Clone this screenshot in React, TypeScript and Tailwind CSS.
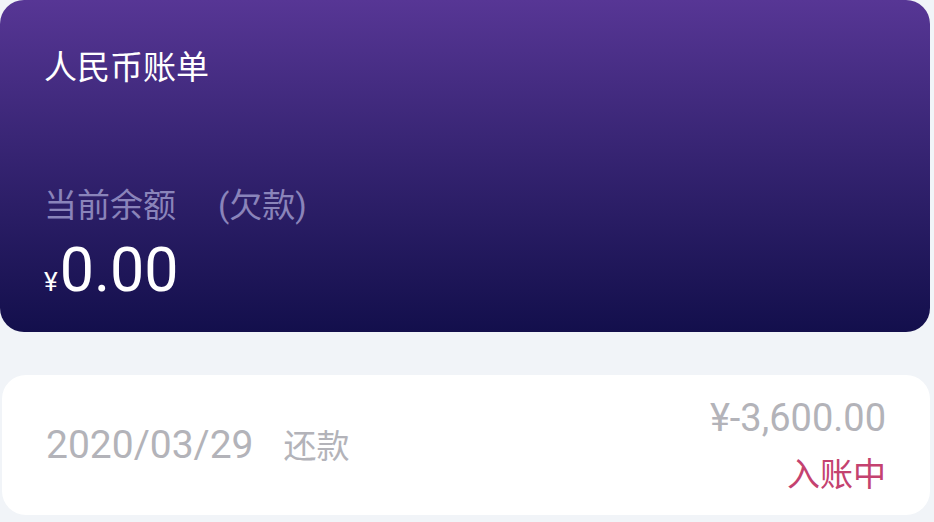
const font = { fontFamily: 'Roboto, "Noto Sans CJK SC", sans-serif' };

export default function App() {
  return (
    <div className="w-[934px] h-[522px] bg-[#f1f4f8] overflow-hidden" style={font}>
      <div className="mr-[4px] h-[332px] rounded-[24px] bg-gradient-to-b from-[#573695] to-[#130f4c] px-[44px] pt-[48px] flex flex-col">
        <div className="text-[33px] leading-[40px] text-white">人民币账单</div>
        <div className="mt-[98px] flex items-center gap-[42px] text-[33px] leading-[40px] text-[#8a84ba]">
          <span>当前余额</span>
          <span>(欠款)</span>
        </div>
        <div className="mt-[12px] flex items-baseline text-white">
          <span className="text-[26px] mr-[2px]">¥</span>
          <span className="text-[61px] leading-[64px]">0.00</span>
        </div>
      </div>
      <div className="mt-[43px] ml-[2px] mr-[4px] h-[140px] rounded-[24px] bg-white px-[44px] flex items-center justify-between">
        <div className="flex items-baseline gap-[30px] text-[#b3b3b9]">
          <span className="text-[39px]">2020/03/29</span>
          <span className="text-[33px]">还款</span>
        </div>
        <div className="flex flex-col items-end">
          <span className="text-[38px] leading-[44px] text-[#b3b3b9]">¥-3,600.00</span>
          <span className="text-[33px] leading-[40px] text-[#c4426f] mt-[15px]">入账中</span>
        </div>
      </div>
    </div>
  );
}
